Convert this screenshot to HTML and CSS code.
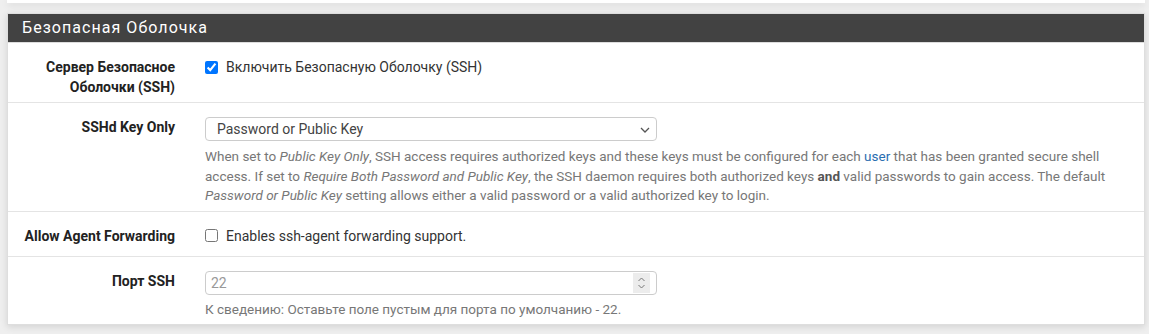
FILE: index.html
```html
<!DOCTYPE html>
<html lang="ru">
<head>
<meta charset="utf-8">
<link rel="stylesheet" href="styles.css">
</head>
<body>
<div class="page">
  <div class="panel-stub"></div>
  <div class="panel">
    <div class="panel-heading">Безопасная Оболочка</div>
    <div class="panel-body">
      <div class="form-row">
        <div class="form-label">Сервер Безопасное<br>Оболочки (SSH)</div>
        <div class="form-field">
          <label class="check"><input type="checkbox" checked> <span>Включить Безопасную Оболочку (SSH)</span></label>
        </div>
      </div>
      <div class="form-row">
        <div class="form-label">SSHd Key Only</div>
        <div class="form-field">
          <div class="select-wrap">
            <select class="select"><option>Password or Public Key</option></select>
            <svg class="chev" width="10" height="6" viewBox="0 0 10 6"><path d="M1 1 L5 5 L9 1" fill="none" stroke="#555" stroke-width="1.3"/></svg>
          </div>
          <div class="help">When set to <i>Public Key Only</i>, SSH access requires authorized keys and these keys must be configured for each <a href="#">user</a> that has been granted secure shell access. If set to <i>Require Both Password and Public Key</i>, the SSH daemon requires both authorized keys <b>and</b> valid passwords to gain access. The default <i>Password or Public Key</i> setting allows either a valid password or a valid authorized key to login.</div>
        </div>
      </div>
      <div class="form-row row-check">
        <div class="form-label">Allow Agent Forwarding</div>
        <div class="form-field">
          <label class="check"><input type="checkbox"> <span>Enables ssh-agent forwarding support.</span></label>
        </div>
      </div>
      <div class="form-row">
        <div class="form-label">Порт SSH</div>
        <div class="form-field">
          <div class="number-wrap">
            <input class="number" type="text" placeholder="22">
            <span class="spin">
              <svg width="9" height="14" viewBox="0 0 9 14"><path d="M1.5 5 L4.5 2 L7.5 5" fill="none" stroke="#777" stroke-width="1"/><path d="M1.5 9 L4.5 12 L7.5 9" fill="none" stroke="#777" stroke-width="1"/></svg>
            </span>
          </div>
          <div class="help help-port">К сведению: Оставьте поле пустым для порта по умолчанию - 22.</div>
        </div>
      </div>
    </div>
  </div>
</div>
</body>
</html>
```
FILE: styles.css
```css
html, body {
  margin: 0;
  padding: 0;
}
body {
  background: #efefef;
  font-family: Roboto, "Liberation Sans", sans-serif;
  font-size: 14px;
  color: #333;
  height: 334px;
  overflow: hidden;
}
.page {
  padding: 0 4px 0 7px;
}
.panel-stub {
  height: 3px;
  background: #fff;
  box-shadow: 0 2px 7px rgba(0, 0, 0, 0.13);
}
.panel {
  margin-top: 10px;
  background: #fff;
  border: 1px solid #dedede;
  box-shadow: 0 2px 7px rgba(0, 0, 0, 0.12);
}
.panel-heading {
  background: #424242;
  color: #fff;
  height: 28px;
  line-height: 28px;
  padding-left: 14px;
  font-size: 16px;
  letter-spacing: 1.05px;
  border-bottom: 1px solid #ddd;
}
.form-row {
  display: grid;
  grid-template-columns: 167px 1fr;
  column-gap: 30px;
  padding: 14px 8px 5px 0;
  border-top: 1px solid #e4e4e4;
}
.form-row:first-child {
  border-top: none;
}
.form-label {
  text-align: right;
  font-weight: bold;
  line-height: 20px;
  color: #222;
  font-size: 14px;
}
.form-field {
  line-height: 20px;
}
.row-check {
  padding-bottom: 10px;
}
.check {
  display: flex;
  align-items: center;
  gap: 8px;
  color: #333;
  font-size: 14px;
}
.check input {
  margin: 0;
  width: 13px;
  height: 13px;
}
.select-wrap {
  position: relative;
  width: 452px;
}
.select {
  appearance: none;
  -webkit-appearance: none;
  width: 100%;
  height: 24px;
  border: 1px solid #ccc;
  border-radius: 4px;
  background: #fff;
  font-family: Roboto, "Liberation Sans", sans-serif;
  font-size: 14px;
  color: #444;
  padding: 0 0 0 11px;
  display: block;
}
.chev {
  position: absolute;
  right: 7px;
  top: 10px;
}
.help {
  color: #777;
  margin-top: 6px;
  line-height: 19.5px;
  font-size: 13.5px;
}
.help a {
  color: #2a6eb0;
  text-decoration: none;
}
.help b {
  color: #555;
}
.number-wrap {
  display: flex;
  align-items: center;
  height: 22px;
  border: 1px solid #ccc;
  border-radius: 4px;
  padding-right: 6px;
  box-sizing: content-box;
  width: 444px;
}
.number {
  flex: 1;
  border: none;
  outline: none;
  height: 20px;
  padding: 0 0 0 5px;
  font-family: Roboto, "Liberation Sans", sans-serif;
  font-size: 14px;
  color: #999;
  background: transparent;
}
.number::placeholder {
  color: #999;
}
.spin {
  display: flex;
  align-items: center;
  justify-content: center;
  width: 17px;
  height: 20px;
  background: #ececec;
}
.help-port {
  margin-top: 5px;
}
```
